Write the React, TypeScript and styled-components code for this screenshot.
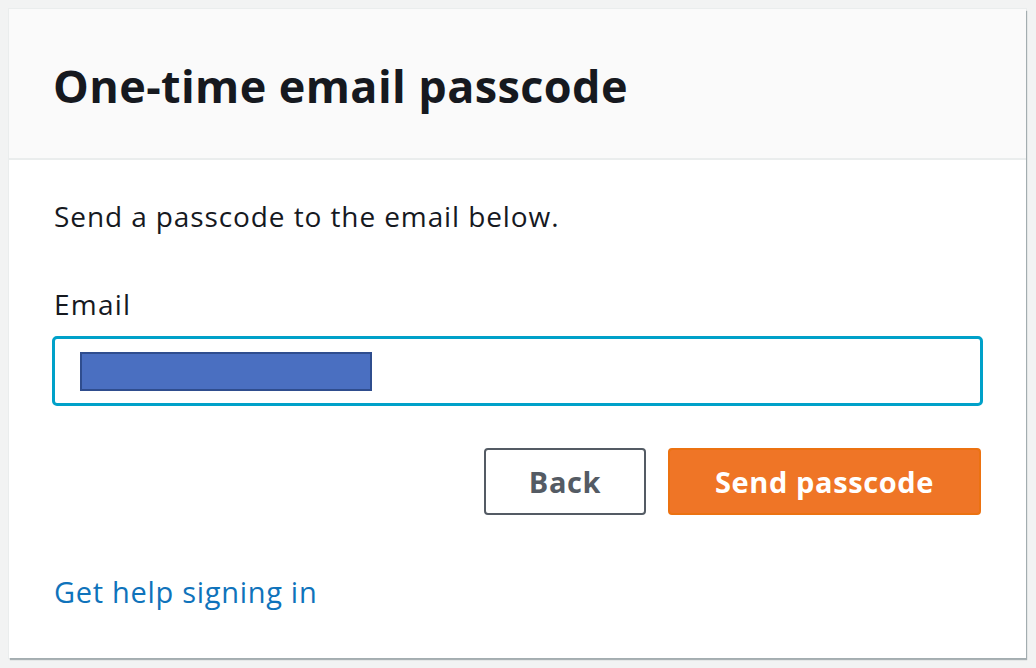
import React from 'react';
import styled, { createGlobalStyle } from 'styled-components';

const GlobalStyle = createGlobalStyle`
    html, body {
        margin: 0;
        padding: 0;
        background: #f2f3f3;
        font-family: "Open Sans", "Noto Sans", sans-serif;
    }
`;

const StyledPage = styled.div`
    width: 1036px;
    height: 668px;
    box-sizing: border-box;
    padding: 9px 10px 10px 9px;
`;

const StyledCard = styled.div`
    width: 1017px;
    height: 649px;
    background: #ffffff;
    box-shadow: 1px 2px 1px 0 rgba(0, 28, 36, 0.3), 0 0 0 1px #eaeded;
    display: flex;
    flex-direction: column;
`;

const StyledHeader = styled.div`
    height: 151px;
    box-sizing: border-box;
    background: #fafafa;
    border-bottom: 2px solid #eaeded;
    display: flex;
    align-items: center;
    padding: 4px 44px 0;
`;

const StyledTitle = styled.h1`
    margin: 0;
    font-size: 45px;
    font-weight: 700;
    color: #16191f;
    letter-spacing: 0.4px;
`;

const StyledBody = styled.div`
    padding: 36px 43px 0;
    display: flex;
    flex-direction: column;
`;

const StyledText = styled.p`
    margin: 0 0 0 2px;
    font-size: 28px;
    letter-spacing: 0.9px;
    color: #16191f;
    line-height: 40px;
`;

const StyledLabel = styled.label`
    margin: 50px 0 14px 2px;
    font-size: 28px;
    letter-spacing: 1.2px;
    color: #16191f;
    line-height: 36px;
`;

const StyledInput = styled.div`
    height: 70px;
    box-sizing: border-box;
    border: 3px solid #00a1c9;
    border-radius: 5px;
    display: flex;
    align-items: center;
    padding: 0 25px;
`;

const StyledRedaction = styled.div`
    width: 292px;
    height: 39px;
    box-sizing: border-box;
    background: #4a6fc1;
    border: 2px solid #2f4d8e;
`;

const StyledActions = styled.div`
    display: flex;
    justify-content: flex-end;
    gap: 22px;
    margin-top: 42px;
    margin-right: 2px;
`;

const StyledButton = styled.button<{ $primary?: boolean }>`
    height: 67px;
    box-sizing: border-box;
    border-radius: 4px;
    font-family: inherit;
    font-size: 29px;
    letter-spacing: 0.6px;
    font-weight: 700;
    cursor: pointer;
    padding: 0;
    border: 2px solid ${p => p.$primary ? '#ec7211' : '#545b64'};
    background: ${p => p.$primary ? '#ef7526' : '#ffffff'};
    color: ${p => p.$primary ? '#ffffff' : '#545b64'};
`;

const StyledLink = styled.a`
    margin: 57px 0 0 2px;
    font-size: 29px;
    letter-spacing: 0.7px;
    line-height: 40px;
    color: #0f73bb;
    text-decoration: none;
    align-self: flex-start;
`;

const App = () => (
    <StyledPage>
        <GlobalStyle />
        <StyledCard>
            <StyledHeader>
                <StyledTitle>One-time email passcode</StyledTitle>
            </StyledHeader>
            <StyledBody>
                <StyledText>Send a passcode to the email below.</StyledText>
                <StyledLabel>Email</StyledLabel>
                <StyledInput>
                    <StyledRedaction />
                </StyledInput>
                <StyledActions>
                    <StyledButton style={{ width: 162 }}>Back</StyledButton>
                    <StyledButton $primary style={{ width: 313 }}>Send passcode</StyledButton>
                </StyledActions>
                <StyledLink href="#">Get help signing in</StyledLink>
            </StyledBody>
        </StyledCard>
    </StyledPage>
);

export default App;
